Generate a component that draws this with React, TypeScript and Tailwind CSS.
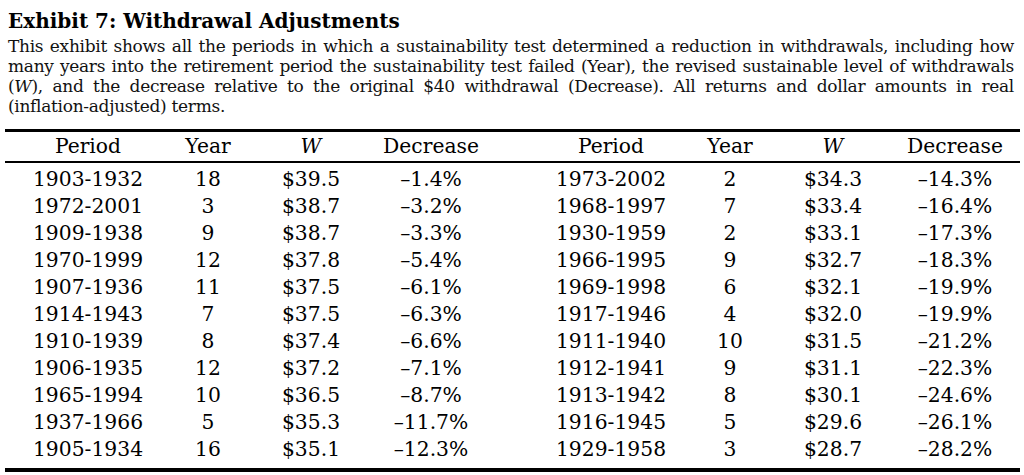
import React from "react";

const left: string[][] = [
  ["1903-1932", "18", "$39.5", "–1.4%"],
  ["1972-2001", "3", "$38.7", "–3.2%"],
  ["1909-1938", "9", "$38.7", "–3.3%"],
  ["1970-1999", "12", "$37.8", "–5.4%"],
  ["1907-1936", "11", "$37.5", "–6.1%"],
  ["1914-1943", "7", "$37.5", "–6.3%"],
  ["1910-1939", "8", "$37.4", "–6.6%"],
  ["1906-1935", "12", "$37.2", "–7.1%"],
  ["1965-1994", "10", "$36.5", "–8.7%"],
  ["1937-1966", "5", "$35.3", "–11.7%"],
  ["1905-1934", "16", "$35.1", "–12.3%"],
];

const right: string[][] = [
  ["1973-2002", "2", "$34.3", "–14.3%"],
  ["1968-1997", "7", "$33.4", "–16.4%"],
  ["1930-1959", "2", "$33.1", "–17.3%"],
  ["1966-1995", "9", "$32.7", "–18.3%"],
  ["1969-1998", "6", "$32.1", "–19.9%"],
  ["1917-1946", "4", "$32.0", "–19.9%"],
  ["1911-1940", "10", "$31.5", "–21.2%"],
  ["1912-1941", "9", "$31.1", "–22.3%"],
  ["1913-1942", "8", "$30.1", "–24.6%"],
  ["1916-1945", "5", "$29.6", "–26.1%"],
  ["1929-1958", "3", "$28.7", "–28.2%"],
];

const cols = [
  "ml-[18px] w-[130px]",
  "ml-[25px] w-[60px]",
  "ml-[23px] w-[100px]",
  "ml-[20px] w-[100px]",
  "ml-[65px] w-[130px]",
  "ml-[24px] w-[60px]",
  "ml-[23px] w-[100px]",
  "ml-[22px] w-[100px]",
];

function Row({ cells, header }: { cells: React.ReactNode[]; header?: boolean }) {
  return (
    <div className={header ? "flex h-[29px] items-center" : "flex h-[27px] items-center"}>
      {cells.map((c, i) => (
        <div key={i} className={`${cols[i]} flex justify-center whitespace-nowrap leading-[27px]`}>
          {c}
        </div>
      ))}
    </div>
  );
}

export default function App() {
  const header = [
    "Period",
    "Year",
    <span className="italic">W</span>,
    "Decrease",
    "Period",
    "Year",
    <span className="italic">W</span>,
    "Decrease",
  ];
  return (
    <div className="w-[1024px] h-[475px] bg-white text-black font-['DejaVu_Serif',serif] overflow-hidden">
      <div className="px-[8px] h-[36px] pt-[8px] text-[20px] leading-[27px] font-bold">
        Exhibit 7: Withdrawal Adjustments
      </div>
      <div className="w-[1014px] pl-[8px] text-[17px] tracking-[-0.3px] leading-[20px] text-[#111]">
        <div className="text-justify [text-align-last:justify] whitespace-nowrap">
          This exhibit shows all the periods in which a sustainability test determined a reduction in withdrawals, including how
        </div>
        <div className="text-justify [text-align-last:justify] whitespace-nowrap">
          many years into the retirement period the sustainability test failed (Year), the revised sustainable level of withdrawals
        </div>
        <div className="text-justify [text-align-last:justify] whitespace-nowrap">
          (<span className="italic">W</span>), and the decrease relative to the original $40 withdrawal (Decrease). All returns and dollar amounts in real
        </div>
        <div>(inflation-adjusted) terms.</div>
      </div>
      <div className="mx-[5px] mt-[13px] w-[1015px] text-[20.3px]">
        <div className="h-[3px] bg-black" />
        <Row cells={header} header />
        <div className="h-[2px] bg-black" />
        <div className="pt-[3px] pb-[5px]">
          {left.map((r, i) => (
            <Row key={i} cells={[...r, ...right[i]]} />
          ))}
        </div>
        <div className="h-[4px] bg-black" />
      </div>
    </div>
  );
}
